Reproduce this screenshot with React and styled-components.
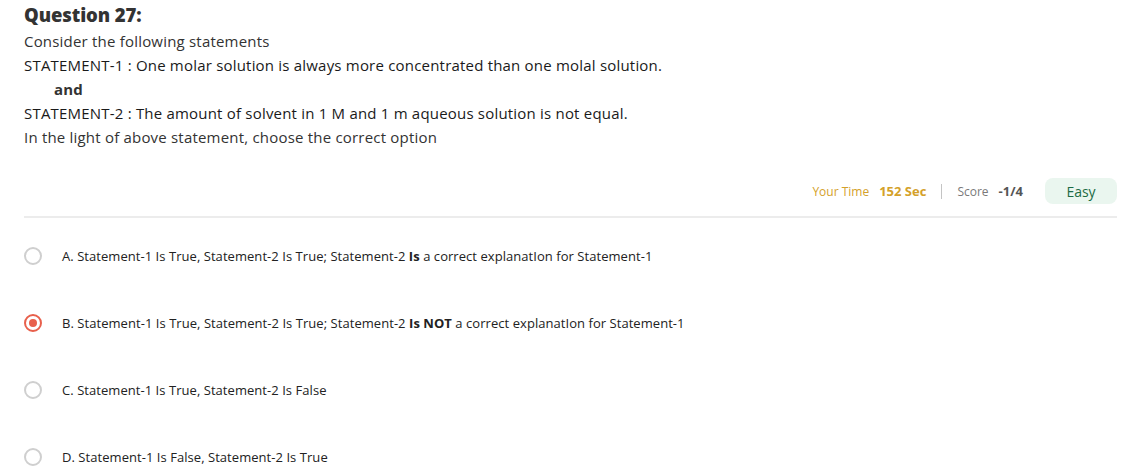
import React from "react";
import styled, { createGlobalStyle } from "styled-components";

const GlobalStyle = createGlobalStyle`
  body {
    margin: 0;
    background: #fff;
    font-family: "Open Sans", "Lato", sans-serif;
    color: #2b2b2b;
  }
`;

const Page = styled.div`
  padding: 3px 4px 0 24px;
`;

const Title = styled.h2`
  margin: 0;
  font-size: 18.5px;
  line-height: 24px;
  font-weight: 800;
  letter-spacing: -0.1px;
  color: #333;
`;

const Body = styled.div`
  margin-top: 2px;
  font-size: 15px;
  line-height: 24px;
  letter-spacing: 0.2px;
  color: #333;
`;

const Line = styled.div`
  padding-left: ${(p) => (p.indent ? "30px" : "0")};
  font-weight: ${(p) => (p.bold ? 700 : 400)};
  color: ${(p) => (p.dark ? "#1a1a1a" : "#333")};
`;

const StatsRow = styled.div`
  margin-top: 29px;
  display: flex;
  justify-content: flex-end;
  align-items: center;
  padding-bottom: 12px;
  border-bottom: 2px solid #ececec;
`;

const Stat = styled.span`
  font-size: 12px;
  color: ${(p) => p.color};
  margin-right: 10px;
`;

const StatValue = styled.span`
  font-size: 13px;
  font-weight: 700;
  color: ${(p) => p.color};
  margin-right: 15px;
`;

const Sep = styled.span`
  width: 1px;
  height: 15px;
  background: #c4c4c4;
  margin-right: 15px;
`;

const Badge = styled.div`
  margin-left: 7px;
  width: 72px;
  height: 26px;
  border-radius: 8px;
  background: #eaf6ef;
  color: #1c6b45;
  font-size: 14px;
  display: flex;
  align-items: center;
  justify-content: center;
`;

const Options = styled.div`
  display: flex;
  flex-direction: column;
  gap: 49px;
  margin-top: 29px;
`;

const Option = styled.label`
  display: flex;
  align-items: center;
  height: 18px;
`;

const Radio = styled.span`
  box-sizing: border-box;
  width: 18px;
  height: 18px;
  border-radius: 50%;
  border: 2px solid ${(p) => (p.checked ? "#e8604c" : "#cfcfcf")};
  display: flex;
  align-items: center;
  justify-content: center;
  margin-right: 20px;
  &::after {
    content: "";
    width: 8px;
    height: 8px;
    border-radius: 50%;
    background: #e8604c;
    display: ${(p) => (p.checked ? "block" : "none")};
  }
`;

const OptionText = styled.span`
  font-size: 13px;
  letter-spacing: 0.05px;
  color: #222;
  b {
    font-weight: 700;
  }
`;

const options = [
  {
    key: "A",
    text: (
      <>
        A. Statement-1 Is True, Statement-2 Is True; Statement-2 <b>Is</b> a correct explanatIon for Statement-1
      </>
    ),
  },
  {
    key: "B",
    checked: true,
    text: (
      <>
        B. Statement-1 Is True, Statement-2 Is True; Statement-2 <b>Is NOT</b> a correct explanatIon for Statement-1
      </>
    ),
  },
  { key: "C", text: <>C. Statement-1 Is True, Statement-2 Is False</> },
  { key: "D", text: <>D. Statement-1 Is False, Statement-2 Is True</> },
];

export default function App() {
  return (
    <Page>
      <GlobalStyle />
      <Title>Question 27:</Title>
      <Body>
        <Line>Consider the following statements</Line>
        <Line dark>STATEMENT-1 : One molar solution is always more concentrated than one molal solution.</Line>
        <Line indent bold>and</Line>
        <Line dark>STATEMENT-2 : The amount of solvent in 1 M and 1 m aqueous solution is not equal.</Line>
        <Line>In the light of above statement, choose the correct option</Line>
      </Body>
      <StatsRow>
        <Stat color="#d4a12a">Your Time</Stat>
        <StatValue color="#d4a12a">152 Sec</StatValue>
        <Sep />
        <Stat color="#7a7a7a">Score</Stat>
        <StatValue color="#555">-1/4</StatValue>
        <Badge>Easy</Badge>
      </StatsRow>
      <Options>
        {options.map((o) => (
          <Option key={o.key}>
            <Radio checked={o.checked} />
            <OptionText>{o.text}</OptionText>
          </Option>
        ))}
      </Options>
    </Page>
  );
}
